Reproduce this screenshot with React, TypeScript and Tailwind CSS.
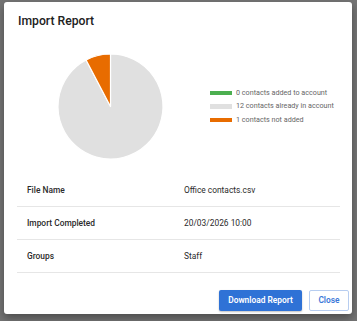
import React from "react";

const rows = [
  { label: "File Name", value: "Office contacts.csv" },
  { label: "Import Completed", value: "20/03/2026 10:00" },
  { label: "Groups", value: "Staff" },
];

const legend = [
  { color: "bg-[#4caf50]", text: "0 contacts added to account" },
  { color: "bg-[#e0e0e0]", text: "12 contacts already in account" },
  { color: "bg-[#e86c00]", text: "1 contacts not added" },
];

export default function App() {
  return (
    <div
      className="w-[357px] h-[321px] bg-[#747474] overflow-hidden pt-[2px] pl-[4px]"
      style={{ fontFamily: "Roboto, 'Liberation Sans', sans-serif" }}
    >
      <div className="w-[348px] h-[312px] bg-white rounded-[3px] shadow-[0_4px_8px_rgba(0,0,0,0.35)] flex flex-col">
        <div className="pt-[11px] pl-[14px] h-[26px] text-[12.2px] leading-[16px] font-medium text-[#212121]">
          Import Report
        </div>
        <div className="h-[146px] flex items-start">
          <svg width="110" height="110" viewBox="0 0 110 110" className="ml-[52px] mt-[24px]">
            <path
              d="M54.5 54.5 L54.5 2 A52.5 52.5 0 1 1 30.1 8.01 Z"
              fill="#e0e0e0"
              stroke="#ffffff"
              strokeWidth="1.2"
              strokeLinejoin="round"
            />
            <path
              d="M54.5 54.5 L30.1 8.01 A52.5 52.5 0 0 1 54.5 2 Z"
              fill="#e86c00"
              stroke="#ffffff"
              strokeWidth="1.2"
              strokeLinejoin="round"
            />
          </svg>
          <div className="ml-[44px] mt-[58px] flex flex-col">
            {legend.map((l) => (
              <div key={l.text} className="flex items-center h-[13.5px]">
                <div className={`w-[22px] h-[4.5px] ${l.color}`} />
                <span className="ml-[4px] text-[7.2px] leading-[10px] text-[#666666]">{l.text}</span>
              </div>
            ))}
          </div>
        </div>
        <div className="ml-[13px] mr-[12px] flex flex-col">
          {rows.map((r) => (
            <div key={r.label} className="flex items-center h-[33px] border-b border-[#e6e6e6]">
              <div className="w-[167px] pl-[10px] text-[8.4px] font-medium text-[#2a2a2a]">{r.label}</div>
              <div className="text-[8.4px] text-[#2a2a2a]">{r.value}</div>
            </div>
          ))}
        </div>
        <div className="flex justify-end gap-[7px] pr-[3px] mt-[17px]">
          <button className="w-[83px] h-[21px] rounded-[2px] bg-[#2f72d6] text-white text-[8.4px] font-semibold shadow-[0_1px_2px_rgba(0,0,0,0.25)]">
            Download Report
          </button>
          <button className="w-[40px] h-[21px] rounded-[2px] border border-[#b7cdf0] bg-white text-[#3b78d8] text-[8.4px] font-semibold">
            Close
          </button>
        </div>
      </div>
    </div>
  );
}
